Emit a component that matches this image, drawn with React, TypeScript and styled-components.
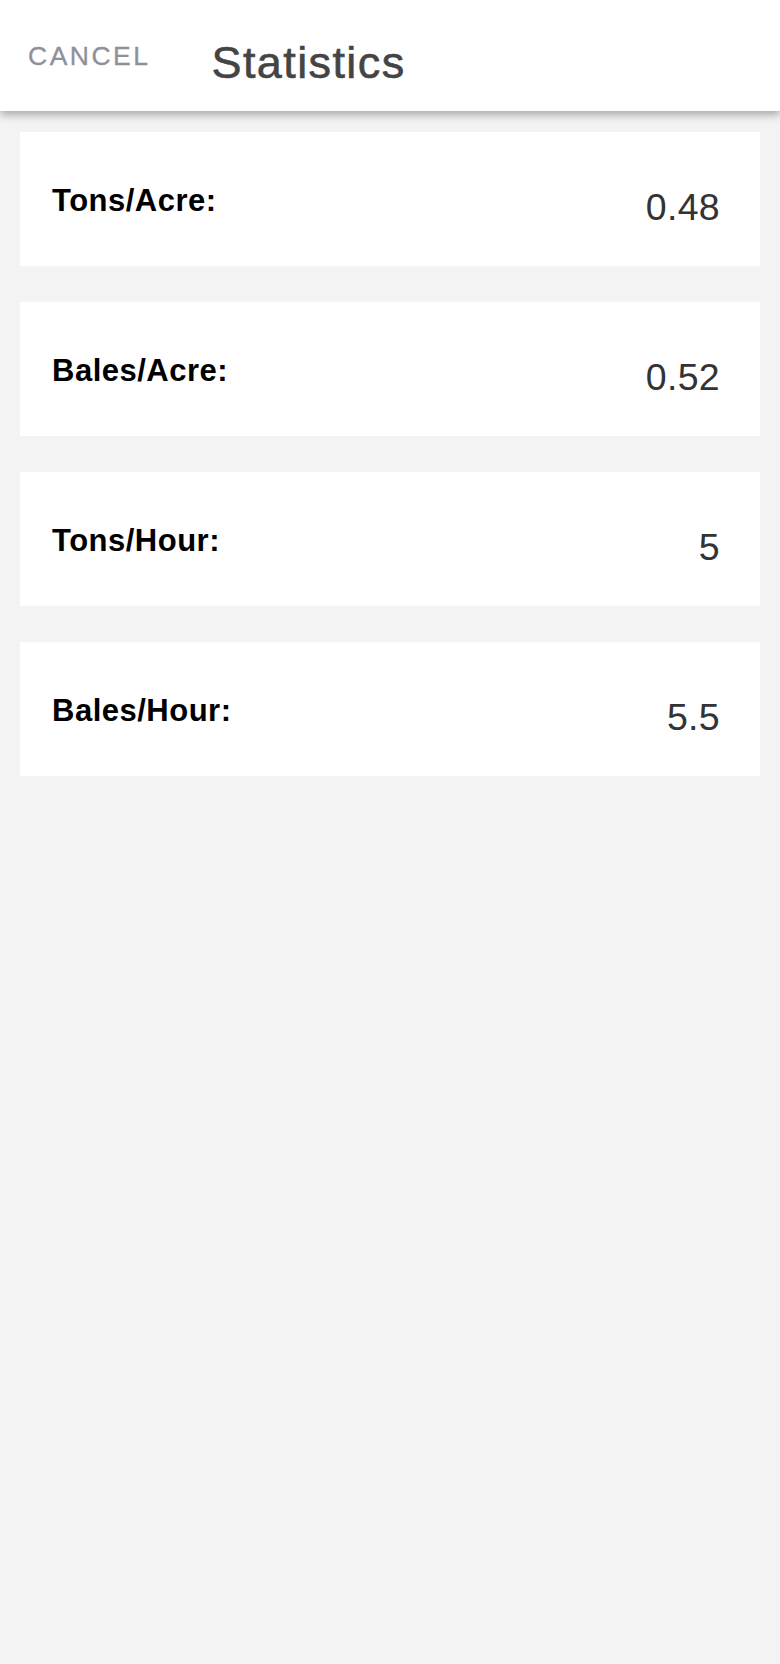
import React from "react";
import styled, { createGlobalStyle } from "styled-components";

const GlobalStyle = createGlobalStyle`
  html, body {
    margin: 0;
    padding: 0;
    background: #f3f3f3;
    font-family: "Liberation Sans", Arial, Helvetica, sans-serif;
  }
  * { box-sizing: border-box; }
`;

const Page = styled.div`
  min-height: 1664px;
  background: #f3f3f3;
  display: flex;
  flex-direction: column;
`;

const Header = styled.header`
  height: 111px;
  background: #ffffff;
  display: flex;
  align-items: flex-start;
  padding: 40px 0 0 28px;
  box-shadow: 0 4px 8px rgba(0, 0, 0, 0.3);
  position: relative;
  z-index: 1;
`;

const CancelButton = styled.button`
  border: none;
  background: none;
  padding: 0;
  margin: 3px 0 0 0;
  font-family: "Liberation Sans", Arial, Helvetica, sans-serif;
  font-size: 26.5px;
  line-height: 1;
  letter-spacing: 2.5px;
  color: #8f9099;
  -webkit-text-stroke: 0.3px #8f9099;
  cursor: pointer;
`;

const Title = styled.h1`
  margin: 0 0 0 61px;
  font-size: 45px;
  line-height: 1;
  font-weight: 400;
  letter-spacing: 1.4px;
  color: #444444;
  -webkit-text-stroke: 0.6px #444444;
`;

const List = styled.main`
  display: flex;
  flex-direction: column;
  gap: 36px;
  padding: 21px 20px;
`;

const Card = styled.section`
  height: 134px;
  background: #ffffff;
  display: flex;
  justify-content: space-between;
  align-items: flex-start;
  padding: 0 40px 0 32px;
`;

const Label = styled.div`
  margin-top: 53px;
  font-size: 31px;
  line-height: 1;
  font-weight: 700;
  letter-spacing: 0.5px;
  color: #000000;
`;

const Value = styled.div`
  margin-top: 57px;
  font-size: 37.5px;
  line-height: 1;
  font-weight: 400;
  letter-spacing: 0.3px;
  color: #333333;
`;

const stats = [
  { label: "Tons/Acre:", value: "0.48" },
  { label: "Bales/Acre:", value: "0.52" },
  { label: "Tons/Hour:", value: "5" },
  { label: "Bales/Hour:", value: "5.5" },
];

export default function App() {
  return (
    <>
      <GlobalStyle />
      <Page>
        <Header>
          <CancelButton>CANCEL</CancelButton>
          <Title>Statistics</Title>
        </Header>
        <List>
          {stats.map((s) => (
            <Card key={s.label}>
              <Label>{s.label}</Label>
              <Value>{s.value}</Value>
            </Card>
          ))}
        </List>
      </Page>
    </>
  );
}
